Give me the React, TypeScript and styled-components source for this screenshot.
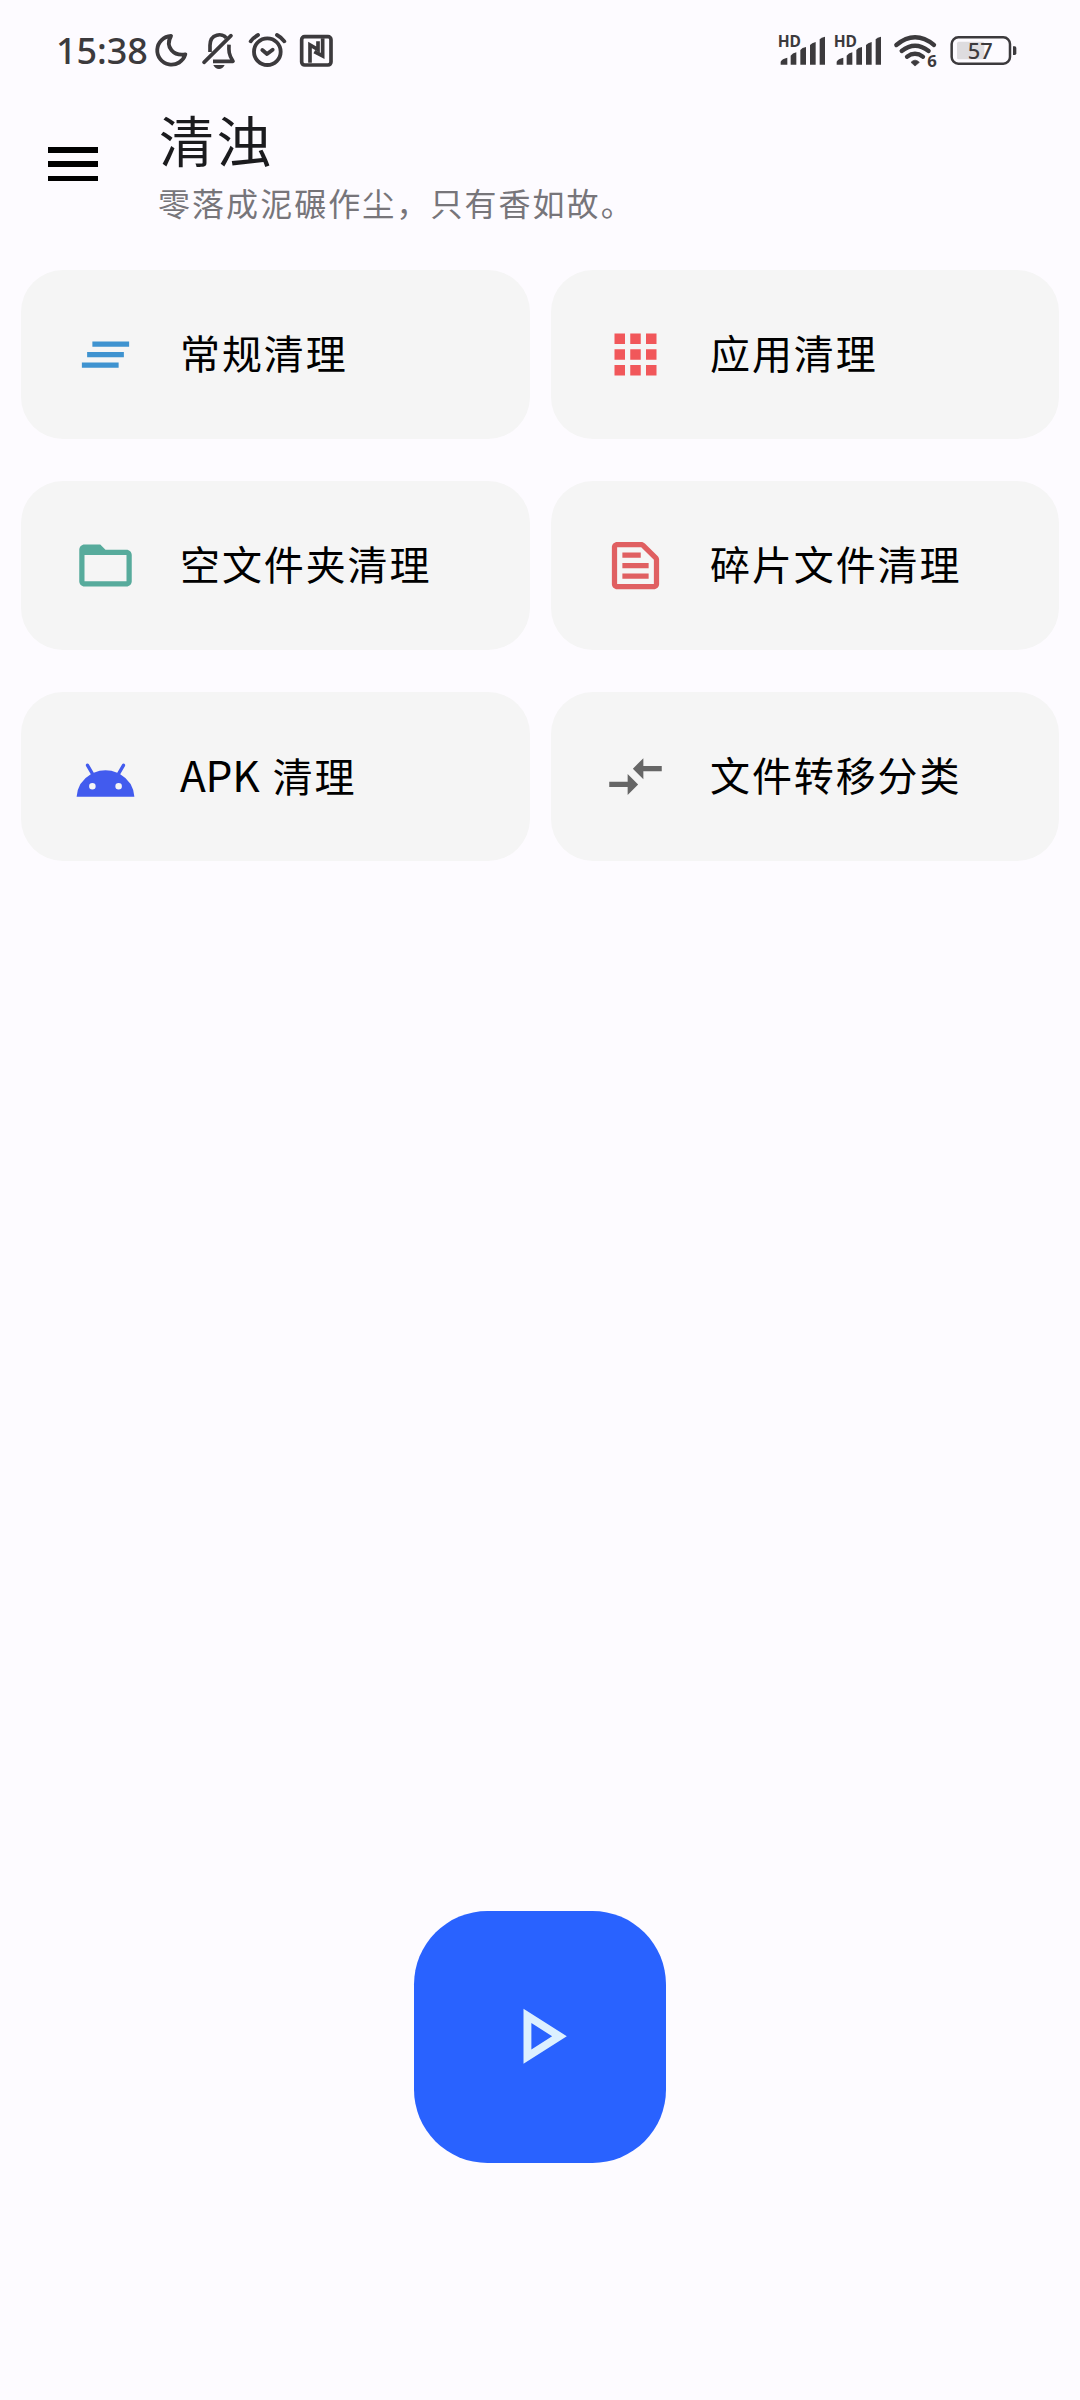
import React from 'react';
import styled, { createGlobalStyle } from 'styled-components';

const GlobalStyle = createGlobalStyle`
  *, *::before, *::after { box-sizing: border-box; }
  html, body { margin: 0; padding: 0; background: #fdfbff; }
`;

const INK = '#3c3a3d';

const Screen = styled.div`
  width: 1080px;
  height: 2400px;
  display: flex;
  flex-direction: column;
  overflow: hidden;
  background: #fdfbff;
  font-family: 'Noto Sans CJK SC', 'Noto Sans', sans-serif;
`;

const StatusBar = styled.div`
  display: flex;
  flex: none;
  align-items: center;
  justify-content: space-between;
  height: 100px;
  padding: 0 63px 0 56px;
`;

const StatusSide = styled.div`
  display: flex;
  align-items: center;
`;

const Clock = styled.span`
  width: 99px;
  padding-top: 2px;
  font-family: 'Noto Sans', sans-serif;
  font-size: 36px;
  line-height: 40px;
  font-weight: 500;
  letter-spacing: -0.1px;
  color: ${INK};
  white-space: nowrap;
`;

const Glyph = styled.svg<{ $w: number; $gap?: number }>`
  display: block;
  flex: none;
  width: ${(p) => p.$w}px;
  height: 40px;
  margin-left: ${(p) => p.$gap ?? 0}px;
  overflow: visible;
`;

const Header = styled.header`
  display: flex;
  flex: none;
  align-items: flex-start;
  height: 170px;
  padding: 0 48px;
`;

const MenuButton = styled.button`
  display: flex;
  flex-direction: column;
  justify-content: space-between;
  width: 50px;
  height: 34px;
  margin: 47px 60px 0 0;
  padding: 0;
  border: 0;
  background: none;
`;

const MenuBar = styled.span`
  display: block;
  height: 5.5px;
  background: #000;
`;

const Titles = styled.div`
  display: flex;
  flex-direction: column;
  padding-top: 8px;
`;

const Title = styled.h1`
  margin: 0;
  padding-left: 1px;
  font-size: 55px;
  line-height: 60px;
  font-weight: 400;
  letter-spacing: 2.4px;
  color: #1b1b1e;
`;

const Subtitle = styled.p`
  margin: 12px 0 0;
  font-size: 32px;
  line-height: 44px;
  letter-spacing: 2.05px;
  color: #77757a;
  white-space: nowrap;
`;

const Grid = styled.main`
  display: grid;
  flex: 1;
  grid-template-columns: 509px 508px;
  grid-auto-rows: 169px;
  gap: 42px 21px;
  padding: 0 21px;
`;

const Card = styled.button`
  display: flex;
  align-items: center;
  padding: 0 0 0 53px;
  border: 0;
  border-radius: 42px;
  background: #f5f5f5;
  font-family: inherit;
  text-align: left;
`;

const CardIcon = styled.svg<{ $color: string }>`
  display: block;
  flex: none;
  width: 63px;
  height: 63px;
  fill: ${(p) => p.$color};
`;

const CardLabel = styled.span`
  margin-left: 43px;
  padding-bottom: 5px;
  font-size: 40px;
  line-height: 56px;
  letter-spacing: 1.9px;
  color: #000;
  white-space: nowrap;
`;

const Latin = styled.span`
  margin-right: 2.5px;
  font-size: 42.5px;
  letter-spacing: -0.3px;
`;

const Footer = styled.footer`
  display: flex;
  flex: none;
  justify-content: center;
  padding-bottom: 237px;
`;

const StartButton = styled.button`
  display: flex;
  align-items: center;
  justify-content: center;
  width: 252px;
  height: 252px;
  padding: 0 1px 1px 0;
  border: 0;
  border-radius: 73.5px;
  background: #2962ff;
`;

const PlayIcon = styled.svg`
  display: block;
  width: 94.5px;
  height: 94.5px;
  fill: #dcf0ff;
`;

const Moon = () => (
  <Glyph $w={35} viewBox="345 30 105 120">
    <path d="M393 48A43 43 0 1 0 436 103C402 109 374 82 393 48Z" fill="none" stroke={INK} strokeWidth="11.5" strokeLinejoin="round" />
  </Glyph>
);

const BellOff = () => (
  <Glyph $w={38} $gap={10} viewBox="480 30 114 120">
    <g fill="none" stroke={INK} strokeWidth="11" strokeLinecap="round" strokeLinejoin="round">
      <path d="M573 47L492 127" />
      <path d="M510 96V76C510 40 548 38 559 54" strokeLinecap="butt" />
      <path d="M567 74C566 92 566 104 579 124H519" strokeLinecap="butt" />
    </g>
    <path d="M520 135H554Q548 147 537 147T520 135Z" fill={INK} />
  </Glyph>
);

const Alarm = () => (
  <Glyph $w={41} $gap={8.7} viewBox="620 30 123 120">
    <g fill="none" stroke={INK} strokeWidth="11.5" strokeLinecap="round" strokeLinejoin="round">
      <circle cx="681" cy="95" r="40" />
      <path d="M666 90L680 102L697 89" />
      <path d="M631 64Q640 52 653 45M710 45Q723 52 732 64" />
    </g>
  </Glyph>
);

const Nfc = () => (
  <Glyph $w={36} $gap={10.6} viewBox="775 30 108 120">
    <g fill="none" stroke={INK} strokeLinejoin="miter">
      <rect x="786" y="50" width="88" height="85" rx="9" strokeWidth="11" />
      <path d="M811 128V75L835 89V64" strokeWidth="11" />
      <path d="M849 55V108L824 95" strokeWidth="11" />
    </g>
  </Glyph>
);

const Signal = ({ gap }: { gap?: number }) => (
  <Glyph $w={48} $gap={gap} viewBox="54 30 144 120">
    <text x="53" y="80" fontFamily="'Noto Sans', sans-serif" fontSize="46" fontWeight="700" textLength="70" lengthAdjust="spacingAndGlyphs" fill={INK}>HD</text>
    <g fill={INK}>
      <path d="M62 134V125Q66 116 82 113V134Z" />
      <path d="M92 134V107Q97 100 109 97V134Z" />
      <path d="M121 134V90Q126 83 138 81V134Z" />
      <path d="M150 134V75Q155 69 167 66V134Z" />
      <path d="M179 134V58Q184 52 195 50V134Z" />
    </g>
  </Glyph>
);

const Wifi = () => (
  <Glyph $w={45} $gap={10.7} viewBox="398 30 135 120">
    <g fill="none" stroke={INK} strokeWidth="13" strokeLinecap="round">
      <path d="M408 75Q464 29 521 75" />
      <path d="M424 93Q464 61 505 93" />
      <path d="M440 110Q464 93 488 110" />
    </g>
    <path d="M452 127Q464 114 477 127L464 138Z" fill={INK} stroke={INK} strokeWidth="2" strokeLinejoin="round" />
    <text x="501" y="141" fontFamily="'Noto Sans', sans-serif" fontSize="50" fontWeight="700" fill={INK}>6</text>
  </Glyph>
);

const Battery = () => (
  <Glyph $w={67} $gap={12} viewBox="569 30 201 120">
    <rect x="590" y="65" width="82" height="53" rx="5" fill="#dedcdf" />
    <rect x="574" y="52" width="175" height="79" rx="20" fill="none" stroke={INK} strokeWidth="7.5" />
    <path d="M758 79H763Q768 79 768 84V100Q768 105 763 105H758Z" fill={INK} />
    <text x="622" y="116" fontFamily="'Noto Sans', sans-serif" fontSize="66" fontWeight="500" textLength="75" lengthAdjust="spacingAndGlyphs" fill={INK}>57</text>
  </Glyph>
);

type Item = { id: string; label: React.ReactNode; color: string; icon: React.ReactNode };

const items: Item[] = [
  {
    id: 'general',
    label: '常规清理',
    color: '#3f93d0',
    icon: <path d="M5 13h14v-2H5v2zm-2 4h14v-2H3v2zM7 7v2h14V7H7z" />,
  },
  {
    id: 'apps',
    label: '应用清理',
    color: '#f1575a',
    icon: <path d="M4 8h4V4H4v4zm6 12h4v-4h-4v4zm-6 0h4v-4H4v4zm0-6h4v-4H4v4zm6 0h4v-4h-4v4zm6-10v4h4V4h-4zm-6 4h4V4h-4v4zm6 6h4v-4h-4v4zm0 6h4v-4h-4v4z" />,
  },
  {
    id: 'folders',
    label: '空文件夹清理',
    color: '#57ab9c',
    icon: <path d="M20 6h-8l-2-2H4c-1.1 0-1.99.9-1.99 2L2 18c0 1.1.9 2 2 2h16c1.1 0 2-.9 2-2V8c0-1.1-.9-2-2-2zm0 12H4V8h16v10z" />,
  },
  {
    id: 'fragments',
    label: '碎片文件清理',
    color: '#e05f61',
    icon: <path d="M14.17 5L19 9.83V19H5V5h9.17m0-2H5c-1.1 0-2 .9-2 2v14c0 1.1.9 2 2 2h14c1.1 0 2-.9 2-2V9.83c0-.53-.21-1.04-.59-1.41l-4.83-4.83c-.37-.38-.88-.59-1.41-.59zM7 15h10v2H7v-2zm0-4h10v2H7v-2zm0-4h7v2H7V7z" />,
  },
  {
    id: 'apk',
    label: (
      <>
        <Latin>APK</Latin> 清理
      </>
    ),
    color: '#425bee',
    icon: (
      <path
        transform="translate(0 1.7)"
        d="M17.6 9.48l1.84-3.18c.16-.31.04-.69-.26-.85a.637.637 0 0 0-.83.22l-1.88 3.24a11.463 11.463 0 0 0-8.94 0L5.65 5.67a.643.643 0 0 0-.87-.2c-.28.18-.37.54-.22.83L6.4 9.48A10.81 10.81 0 0 0 1 18h22a10.81 10.81 0 0 0-5.4-8.52zM7 15.25a1.25 1.25 0 1 1 0-2.5 1.25 1.25 0 0 1 0 2.5zm10 0a1.25 1.25 0 1 1 0-2.5 1.25 1.25 0 0 1 0 2.5z"
      />
    ),
  },
  {
    id: 'transfer',
    label: '文件转移分类',
    color: '#666666',
    icon: <path d="M9.01 14H2v2h7.01v3L13 15l-3.99-4v3zm5.98-1v-3H22V8h-7.01V5L11 9l3.99 4z" />,
  },
];

export default function App() {
  return (
    <>
      <GlobalStyle />
      <Screen>
        <StatusBar>
          <StatusSide>
            <Clock>15:38</Clock>
            <Moon />
            <BellOff />
            <Alarm />
            <Nfc />
          </StatusSide>
          <StatusSide>
            <Signal />
            <Signal gap={8} />
            <Wifi />
            <Battery />
          </StatusSide>
        </StatusBar>
        <Header>
          <MenuButton aria-label="菜单">
            <MenuBar />
            <MenuBar />
            <MenuBar />
          </MenuButton>
          <Titles>
            <Title>清浊</Title>
            <Subtitle>零落成泥碾作尘，只有香如故。</Subtitle>
          </Titles>
        </Header>
        <Grid>
          {items.map((item) => (
            <Card key={item.id}>
              <CardIcon $color={item.color} viewBox="0 0 24 24">
                {item.icon}
              </CardIcon>
              <CardLabel>{item.label}</CardLabel>
            </Card>
          ))}
        </Grid>
        <Footer>
          <StartButton aria-label="开始">
            <PlayIcon viewBox="0 0 24 24">
              <path d="M10 8.64L15.27 12 10 15.36V8.64M8 5v14l11-7L8 5z" />
            </PlayIcon>
          </StartButton>
        </Footer>
      </Screen>
    </>
  );
}
